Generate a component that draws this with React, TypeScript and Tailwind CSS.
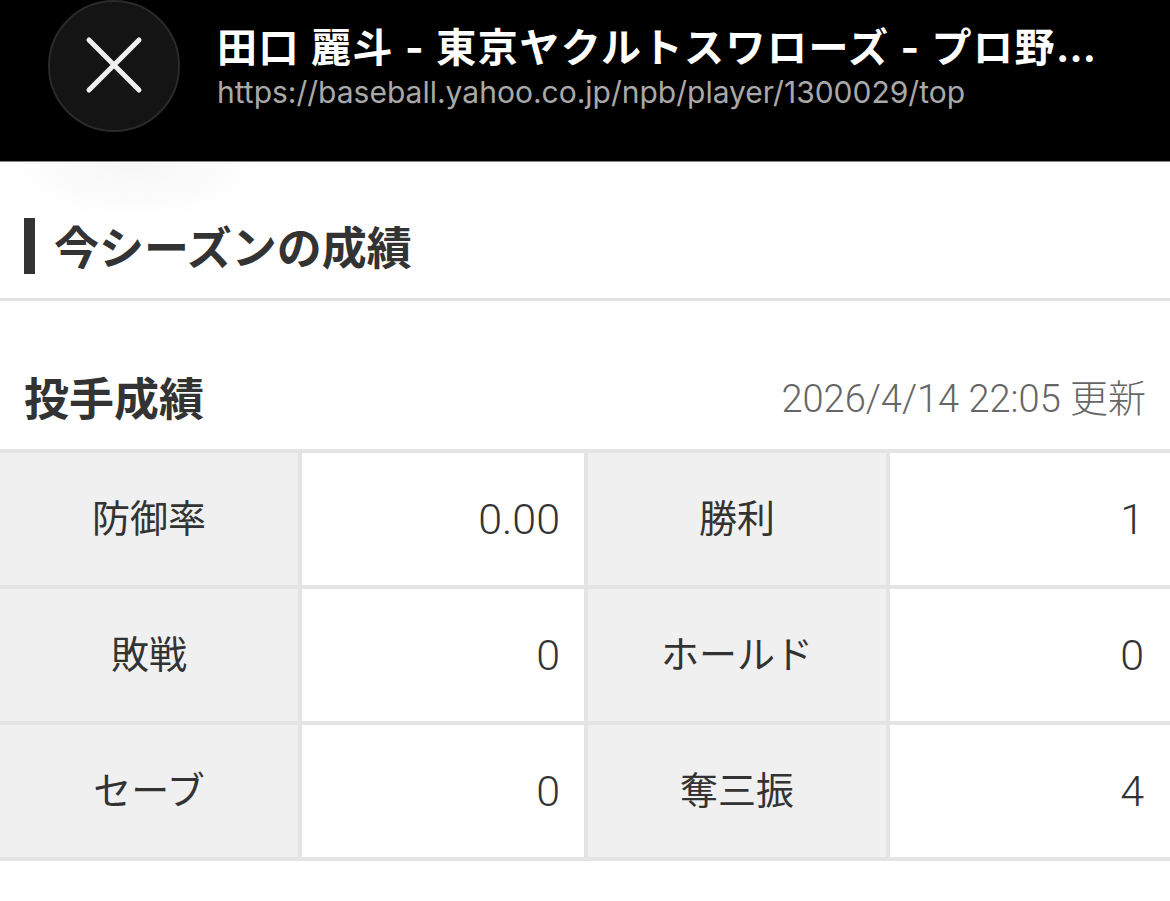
import React from "react";

const rows: [string, string, string, string][] = [
  ["防御率", "0.00", "勝利", "1"],
  ["敗戦", "0", "ホールド", "0"],
  ["セーブ", "0", "奪三振", "4"],
];

export default function App() {
  return (
    <div className="relative w-[1170px] h-[901px] bg-white overflow-hidden font-['Roboto','Noto_Sans_CJK_JP',sans-serif]">
      {/* Top bar */}
      <div className="flex items-start h-[162px] bg-black border-b border-[#8a8a8a] pl-[48px]">
        <div className="flex items-center justify-center w-[132px] h-[132px] rounded-full bg-[#141414] border-2 border-[#2a2a2a] shrink-0">
          <svg width="60" height="60" viewBox="0 0 60 60">
            <path d="M5 4 L55 54 M55 4 L5 54" stroke="#efefef" strokeWidth="5" strokeLinecap="round" fill="none" />
          </svg>
        </div>
        <div className="ml-[37px] pt-[22px] min-w-0 w-[920px] font-['Inter','Noto_Sans_CJK_JP',sans-serif]">
          <div className="text-[40px] leading-[52px] tracking-[1.5px] font-bold text-white whitespace-nowrap">
            田口 麗斗 - 東京ヤクルトスワローズ - プロ野…
          </div>
          <div className="text-[30px] leading-[36px] text-[#a9a9a9] whitespace-nowrap">
            https://baseball.yahoo.co.jp/npb/player/1300029/top
          </div>
        </div>
      </div>
      <div className="absolute left-0 top-[163px] w-[270px] h-[60px] bg-[radial-gradient(ellipse_at_top,rgba(0,0,0,0.035),transparent_70%)]" />

      {/* Section heading */}
      <div className="flex items-center pl-[24px] pt-[56px] pb-[24px] border-b-[3px] border-[#e3e3e3]">
        <div className="w-[11px] h-[56px] bg-[#333333]" />
        <div className="ml-[19px] text-[45px] leading-[56px] font-bold text-[#333333] font-['Noto_Sans_CJK_JP',sans-serif]">
          今シーズンの成績
        </div>
      </div>

      {/* Pitching header */}
      <div className="flex items-center justify-between px-[24px] pt-[66px] pb-[22px]">
        <div className="text-[45px] leading-[60px] font-bold text-[#333333] font-['Noto_Sans_CJK_JP',sans-serif]">
          投手成績
        </div>
        <div className="pt-[5px] text-[38px] leading-[55px] font-light text-[#666666]">2026/4/14 22:05 更新</div>
      </div>

      {/* Table */}
      <div className="grid grid-cols-[298px_282px_298px_1fr] gap-[4px] bg-[#e4e4e4] py-[4px]">
        {rows.map((r, i) => (
          <React.Fragment key={i}>
            <div className="h-[132px] bg-[#f0f0f0] flex items-center justify-center text-[38px] text-[#333333]">
              {r[0]}
            </div>
            <div className="h-[132px] bg-white flex items-center justify-end pr-[24px] text-[43px] font-light text-[#333333]">
              {r[1]}
            </div>
            <div className="h-[132px] bg-[#f0f0f0] flex items-center justify-center text-[38px] text-[#333333]">
              {r[2]}
            </div>
            <div className="h-[132px] bg-white flex items-center justify-end pr-[26px] text-[43px] font-light text-[#333333]">
              {r[3]}
            </div>
          </React.Fragment>
        ))}
      </div>
    </div>
  );
}
